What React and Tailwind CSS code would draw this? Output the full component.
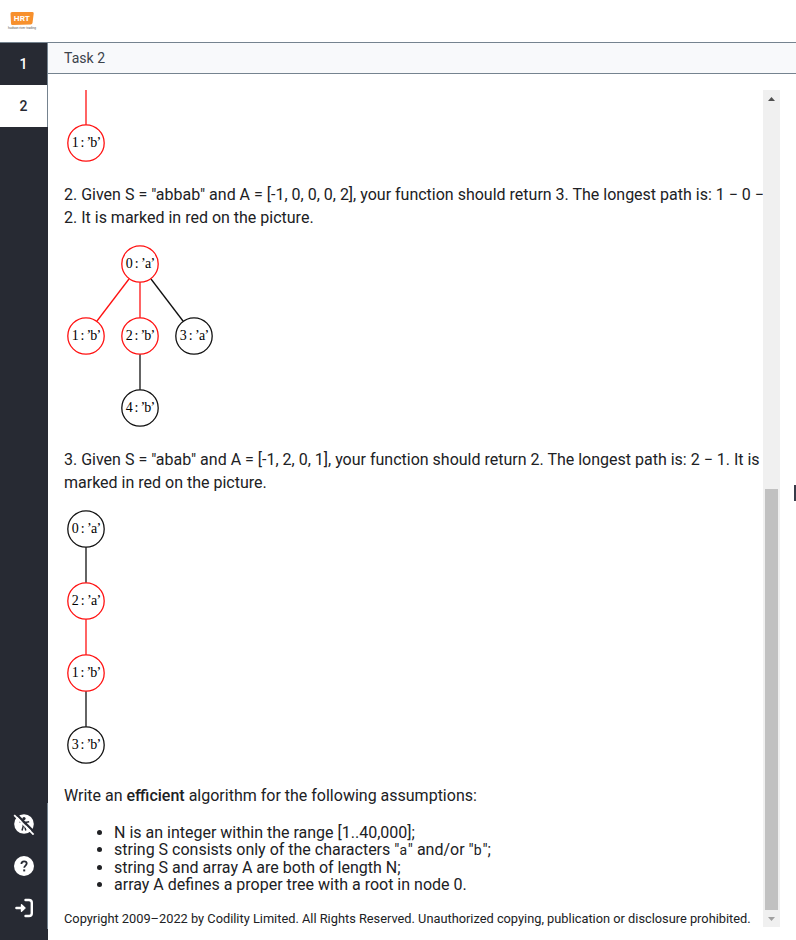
const RED = '#ff1111';
const BLACK = '#111111';

function Node({ x, y, label, color = BLACK }) {
  return (
    <g>
      <circle cx={x} cy={y} r="18.2" fill="white" stroke={color} strokeWidth="1.3" />
      <text x={x + 0.4} y={y + 4} textAnchor="middle" textLength="29.5" fontSize="14" fill="#000" fontFamily="'Liberation Serif', serif">
        {label}
      </text>
    </g>
  );
}

function Edge({ from, to, color = BLACK }) {
  return <line x1={from[0]} y1={from[1]} x2={to[0]} y2={to[1]} stroke={color} strokeWidth="1.3" />;
}

function Sidebar() {
  return (
    <nav className="flex w-12 shrink-0 flex-col bg-[#272a33] text-sm font-medium">
      <div className="flex h-[42px] items-center justify-center border-r border-[#75838f] text-white">1</div>
      <div className="flex h-[42px] items-center justify-center border-r border-[#75838f] bg-white text-[#272a33]">2</div>
      <div className="mt-auto mb-[11px] flex h-[126px] flex-col items-center border-r border-[#75838f]">
        <div className="flex h-[42px] items-center">
          <svg width="22" height="22" viewBox="0 0 22 22">
            <circle cx="11" cy="11" r="9.8" fill="white" />
            <circle cx="11" cy="5.6" r="1.6" fill="#272a33" />
            <path d="M6.5 8.7l3.5.7h2l4.2-.7M10.2 9.5v4L9 17.5M11.8 9.5v4l1 4" fill="none" stroke="#272a33" strokeWidth="1.5" />
            <path d="M2.8 0.6L22.4 20.2" stroke="#272a33" strokeWidth="2.2" />
            <path d="M1.2 2.2L20.6 21.6" stroke="white" strokeWidth="1.8" />
          </svg>
        </div>
        <div className="flex h-[42px] items-center">
          <svg width="20" height="20" viewBox="0 0 20 20">
            <circle cx="10" cy="10" r="10" fill="white" />
            <path d="M7.4 8c0-1.7 1.1-2.7 2.7-2.7 1.5 0 2.6.9 2.6 2.3 0 1.9-2.5 2.1-2.5 4.2" fill="none" stroke="#272a33" strokeWidth="1.8" />
            <rect x="9.2" y="13.4" width="2" height="2" fill="#272a33" />
          </svg>
        </div>
        <div className="flex h-[42px] items-center">
          <svg width="20" height="20" viewBox="0 0 20 20" fill="none" stroke="white" strokeWidth="2.4" strokeLinecap="round">
            <path d="M11.5 2H15a2.8 2.8 0 0 1 2.8 2.8v10.4A2.8 2.8 0 0 1 15 18h-3.5" />
            <path d="M2.4 10H9" />
            <path d="M7.5 6.8L11 10l-3.500 3.200z" fill="white" strokeWidth="1.4" strokeLinejoin="round" />
          </svg>
        </div>
      </div>
    </nav>
  );
}

function Scrollbar() {
  return (
    <div className="flex h-[837px] w-[17px] shrink-0 flex-col items-center bg-[#f0f0f0]">
      <div className="flex h-[17px] items-center">
        <svg width="7" height="4" viewBox="0 0 7 4"><path d="M0 4L3.5 0L7 4z" fill="#505050" /></svg>
      </div>
      <div className="mt-[382px] h-[421px] w-[13px] bg-[#c1c1c1]" />
      <div className="flex h-[17px] items-center">
        <svg width="7" height="4" viewBox="0 0 7 4"><path d="M0 0H7L3.5 4z" fill="#a0a0a0" /></svg>
      </div>
    </div>
  );
}

export default function App() {
  return (
    <div className="flex h-[940px] w-[796px] flex-col overflow-hidden bg-white font-[Roboto,sans-serif] text-[#202124]">
      <header className="h-[43px] shrink-0 border-b border-[#75838f] pt-3 pl-1">
        <svg className="block overflow-visible" width="40" height="24" viewBox="-4 0 40 24">
          <path d="M4 0H24.5Q26 0 25.7 1.5L24.5 11Q24.2 12.400 22.8 12.400L4.5 13Q3 13 3 11.5L2.5 1.5Q2.500 0 4 0z" fill="#f7902d" />
          <text x="13.8" y="8.900" textAnchor="middle" textLength="16" lengthAdjust="spacingAndGlyphs" fontSize="7.8" fontWeight="700" fill="white" fontFamily="Roboto, sans-serif">HRT</text>
          <text x="0" y="17.3" textLength="28" lengthAdjust="spacingAndGlyphs" fontSize="3.8" fill="#555" fontFamily="Roboto, sans-serif">hudson river trading</text>
        </svg>
      </header>
      <div className="flex min-h-0 flex-1">
        <Sidebar />
        <main className="flex min-w-0 flex-1 flex-col">
          <div className="flex h-[31px] shrink-0 items-center border-b border-[#75838f] bg-[#f8f9fb] pl-4 text-sm tracking-[0.05px] text-[#3c434b]">Task 2</div>
          <div className="flex flex-1 pt-4 pl-4">
            <article className="w-[699px] shrink-0 text-base leading-[23px] whitespace-nowrap">
              <svg className="block" width="160" height="93" viewBox="64 90 160 93">
                <Edge from={[86, 90]} to={[86, 125]} color={RED} />
                <Node x={86} y={143} label="1 : ’b’" color={RED} />
              </svg>
              <p>
                2. Given S = "abbab" and A = [-1, 0, 0, 0, 2], your function should return 3. The longest path is: 1 − 0 −<br />
                2. It is marked in red on the picture.
              </p>
              <svg className="mt-[11px] block" width="160" height="208" viewBox="64 240 160 208">
                <Edge from={[129, 279]} to={[97, 321]} color={RED} />
                <Edge from={[140, 282]} to={[140, 318]} color={RED} />
                <Edge from={[151, 279]} to={[183, 321]} />
                <Edge from={[140, 354]} to={[140, 390]} />
                <Node x={140} y={264} label="0 : ’a’" color={RED} />
                <Node x={86} y={336} label="1 : ’b’" color={RED} />
                <Node x={140} y={336} label="2 : ’b’" color={RED} />
                <Node x={194} y={336} label="3 : ’a’" />
                <Node x={140} y={408} label="4 : ’b’" />
              </svg>
              <p>
                3. Given S = "abab" and A = [-1, 2, 0, 1], your function should return 2. The longest path is: 2 − 1. It is<br />
                marked in red on the picture.
              </p>
              <svg className="mt-[11px] block" width="160" height="279" viewBox="64 505 160 279">
                <Edge from={[86, 547]} to={[86, 583]} />
                <Edge from={[86, 619]} to={[86, 655]} color={RED} />
                <Edge from={[86, 691]} to={[86, 727]} />
                <Node x={86} y={529} label="0 : ’a’" />
                <Node x={86} y={601} label="2 : ’a’" color={RED} />
                <Node x={86} y={673} label="1 : ’b’" color={RED} />
                <Node x={86} y={745} label="3 : ’b’" />
              </svg>
              <p>Write an <strong className="font-medium">efficient</strong> algorithm for the following assumptions:</p>
              <ul className="mt-[16.600px] list-disc pl-[50px] leading-[17.6px]">
                <li>N is an integer within the range [1..40,000];</li>
                <li>string S consists only of the characters "<code className="font-[Roboto,sans-serif] text-sm leading-none tracking-[0.8px]">a</code>" and/or "<code className="font-[Roboto,sans-serif] text-sm leading-none tracking-[0.8px]">b</code>";</li>
                <li>string S and array A are both of length N;</li>
                <li>array A defines a proper tree with a root in node 0.</li>
              </ul>
              <p className="mt-[13.400px] text-[12.8px]">Copyright 2009–2022 by Codility Limited. All Rights Reserved. Unauthorized copying, publication or disclosure prohibited.</p>
            </article>
            <Scrollbar />
            <div className="mt-[395px] ml-auto h-4 w-0.5 bg-[#373b49]" />
          </div>
        </main>
      </div>
    </div>
  );
}
